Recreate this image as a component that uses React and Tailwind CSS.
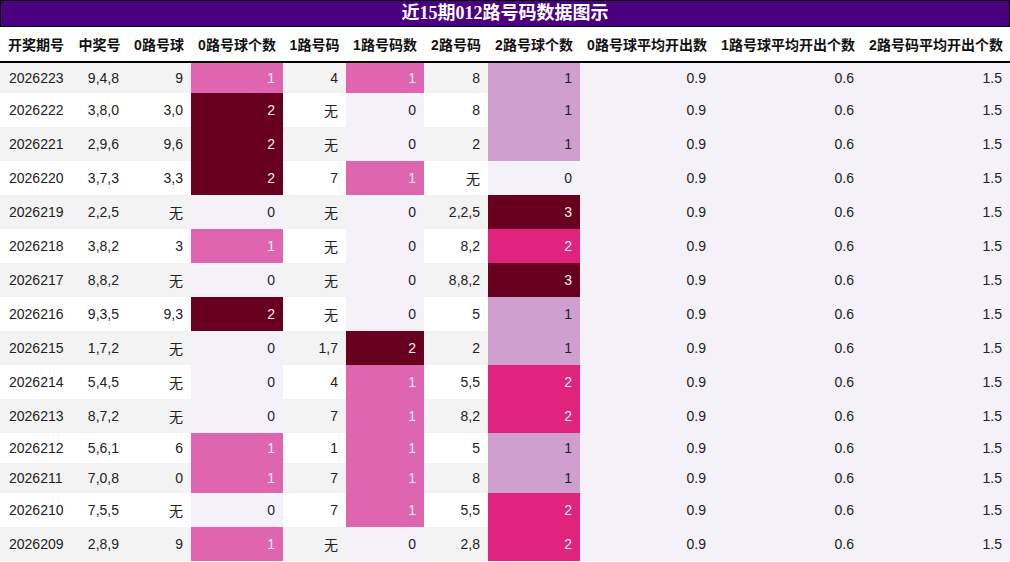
import React from 'react'

// 近15期 012路 数据：期号, 中奖号, 0路号球, 0路个数, 1路号码, 1路个数, 2路号码, 2路个数
const ROWS = [
  ['2026223', '9,4,8', '9', 1, '4', 1, '8', 1],
  ['2026222', '3,8,0', '3,0', 2, '无', 0, '8', 1],
  ['2026221', '2,9,6', '9,6', 2, '无', 0, '2', 1],
  ['2026220', '3,7,3', '3,3', 2, '7', 1, '无', 0],
  ['2026219', '2,2,5', '无', 0, '无', 0, '2,2,5', 3],
  ['2026218', '3,8,2', '3', 1, '无', 0, '8,2', 2],
  ['2026217', '8,8,2', '无', 0, '无', 0, '8,8,2', 3],
  ['2026216', '9,3,5', '9,3', 2, '无', 0, '5', 1],
  ['2026215', '1,7,2', '无', 0, '1,7', 2, '2', 1],
  ['2026214', '5,4,5', '无', 0, '4', 1, '5,5', 2],
  ['2026213', '8,7,2', '无', 0, '7', 1, '8,2', 2],
  ['2026212', '5,6,1', '6', 1, '1', 1, '5', 1],
  ['2026211', '7,0,8', '0', 1, '7', 1, '8', 1],
  ['2026210', '7,5,5', '无', 0, '7', 1, '5,5', 2],
  ['2026209', '2,8,9', '9', 1, '无', 0, '2,8', 2],
]

const HEADERS = [
  '开奖期号', '中奖号', '0路号球', '0路号球个数', '1路号码', '1路号码数',
  '2路号码', '2路号球个数', '0路号球平均开出数', '1路号球平均开出个数', '2路号码平均开出个数',
]

const WIDTHS = ['w-[72px]', 'w-[55px]', 'w-[64px]', 'w-[92px]', 'w-[63px]', 'w-[78px]', 'w-[64px]', 'w-[92px]', 'w-[134px]', 'w-[148px]', 'w-[148px]']

// heatmap classes, max 2 for 0/1 路, max 3 for 2 路
const HEAT_2 = {
  0: 'bg-[#f4f2f8] text-[#222]',
  1: 'bg-[#df65b0] text-[#f7eef4]',
  2: 'bg-[#67001f] text-[#f7eef4]',
}
const HEAT_3 = {
  0: 'bg-[#f4f2f8] text-[#222]',
  1: 'bg-[#cfa0cf] text-[#222]',
  2: 'bg-[#e0237c] text-[#f7eef4]',
  3: 'bg-[#67001f] text-[#f7eef4]',
}

const td = 'px-2 py-[7px] text-right leading-[normal]'

export default function App() {
  return (
    <div className="w-[1010px] bg-white text-[14px] text-[#222]"
      style={{ fontFamily: '"Liberation Sans", "Noto Sans CJK SC", sans-serif' }}>
      {/* Title */}
      <div className="h-[27px] border border-black bg-[#4b0082] text-center text-[18px] font-bold leading-[25px] text-white"
        style={{ fontFamily: '"Liberation Serif", "Noto Sans CJK SC", serif' }}>
        近15期012路号码数据图示
      </div>

      <table className="w-[1010px] table-fixed border-collapse">
        <colgroup>
          {WIDTHS.map((w, i) => <col key={i} className={w} />)}
        </colgroup>
        <thead>
          <tr className="border-b-2 border-black">
            {HEADERS.map(h => (
              <th key={h} className="whitespace-nowrap px-0 py-[7px] text-center font-bold leading-[normal] text-[#111]">
                {h}
              </th>
            ))}
          </tr>
        </thead>
        <tbody>
          {ROWS.map((r, i) => (
            <tr key={r[0]} className={i % 2 === 0 ? 'bg-[#f3f3f3]' : 'bg-white'}>
              <td className="px-[9px] py-[7px] text-left leading-[normal]">{r[0]}</td>
              <td className={td}>{r[1]}</td>
              <td className={td}>{r[2]}</td>
              <td className={`${td} ${HEAT_2[r[3]]}`}>{r[3]}</td>
              <td className={td}>{r[4]}</td>
              <td className={`${td} ${HEAT_2[r[5]]}`}>{r[5]}</td>
              <td className={td}>{r[6]}</td>
              <td className={`${td} ${HEAT_3[r[7]]}`}>{r[7]}</td>
              <td className={`${td} bg-[#f4f2f8]`}>0.9</td>
              <td className={`${td} bg-[#f4f2f8]`}>0.6</td>
              <td className={`${td} bg-[#f4f2f8]`}>1.5</td>
            </tr>
          ))}
        </tbody>
      </table>
    </div>
  )
}
